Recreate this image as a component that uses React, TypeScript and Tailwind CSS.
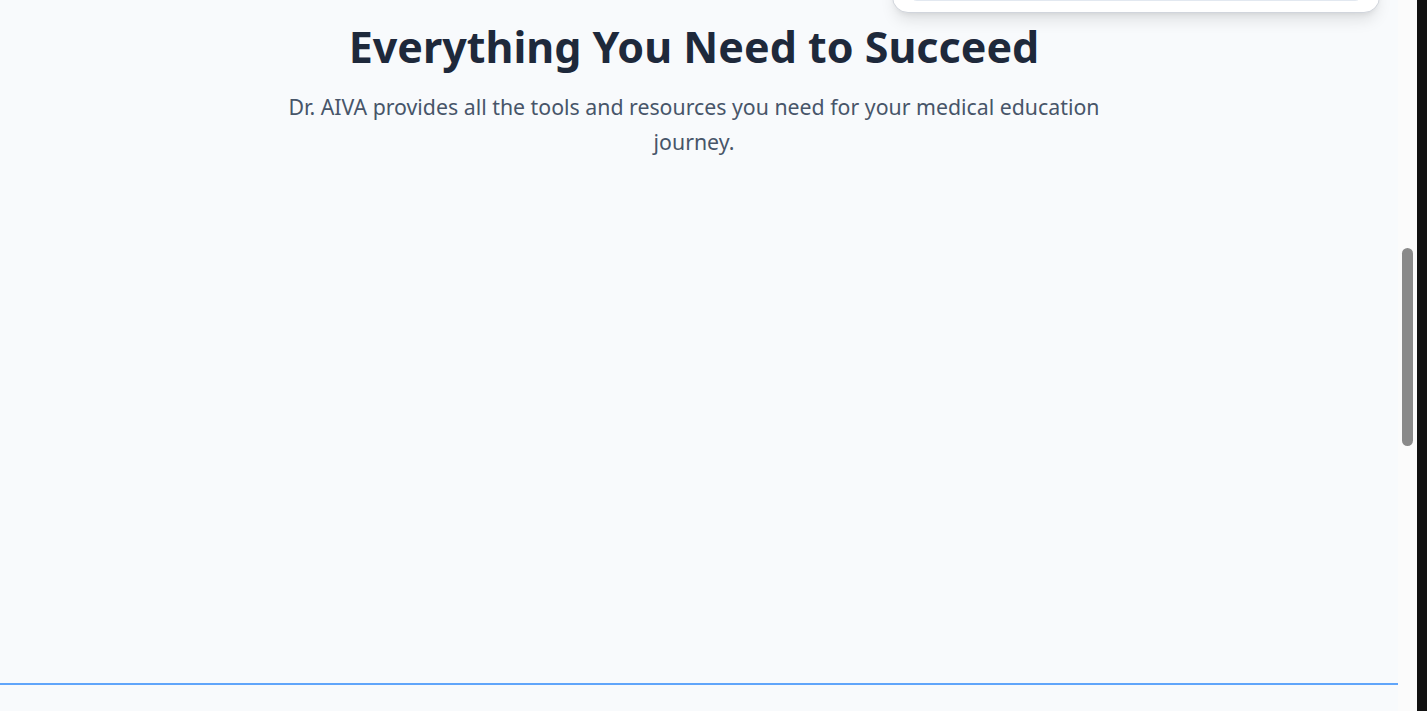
export default function App() {
  return (
    <div className="flex h-[711px] w-[1427px] overflow-hidden bg-[#f8fafc]" style={{ fontFamily: '"Noto Sans", "Open Sans", sans-serif' }}>
      <div className="relative flex w-[1398px] flex-col">
        <div className="absolute left-[892px] top-[-60px] w-[488px] rounded-2xl border border-gray-300 bg-white px-4 pb-[11px] shadow-lg">
          <div className="h-[60px] rounded-lg border border-slate-200" />
        </div>
        <section className="flex-1 pl-6 pr-[34px] pt-[21px] text-center">
          <h2 className="text-[43px] font-bold leading-[1.2] text-[#1e293b]">Everything You Need to Succeed</h2>
          <p className="mx-auto mt-[16px] max-w-[860px] text-[21.3px] leading-[35px] text-[#475569]">
            Dr. AIVA provides all the tools and resources you need for your medical education journey.
          </p>
        </section>
        <div className="h-[28px] border-t-2 border-[#60a5fa]" />
      </div>
      <div className="flex w-[19px] flex-col bg-[#fbfbfb] pt-[248px]">
        <div className="ml-[4px] h-[198px] w-[11px] rounded-full bg-[#8a8a8a]" />
      </div>
      <div className="w-[10px] bg-[#111111]" />
    </div>
  )
}
